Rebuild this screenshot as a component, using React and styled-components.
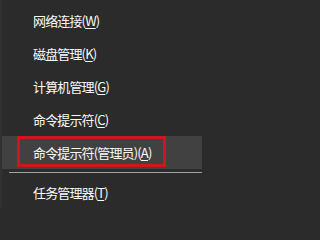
import React from 'react';
import styled, { createGlobalStyle } from 'styled-components';

const GlobalStyle = createGlobalStyle`
  html, body {
    margin: 0;
    padding: 0;
    background: #2b2b2b;
  }
`;

const items = [
  { label: '网络连接', key: 'W' },
  { label: '磁盘管理', key: 'K' },
  { label: '计算机管理', key: 'G' },
  { label: '命令提示符', key: 'C' },
  { label: '命令提示符(管理员)', key: 'A', active: true },
];

const App = () => {
  return (
    <>
      <GlobalStyle />
      <Menu>
        {items.map((it) => (
          <Item key={it.key} $active={it.active}>
            {it.label}(<u>{it.key}</u>)
            {it.active && <Mark />}
          </Item>
        ))}
        <Separator />
        <Item>
          任务管理器(<u>T</u>)
        </Item>
      </Menu>
    </>
  );
};

const Menu = styled.div`
  width: 208px;
  height: 209px;
  box-sizing: border-box;
  padding-top: 4px;
  background: #2b2b2b;
  border-left: 2px solid #313131;
  overflow: hidden;
  display: flex;
  flex-direction: column;
`;

const Item = styled.div`
  position: relative;
  height: 33px;
  flex-shrink: 0;
  display: flex;
  align-items: center;
  padding-left: 31px;
  margin-right: 6px;
  background: ${(p) => (p.$active ? '#414141' : 'transparent')};
  color: #fafafa;
  font-family: 'Microsoft YaHei', 'Noto Sans CJK SC', 'Noto Sans', sans-serif;
  font-size: 13px;
  letter-spacing: -0.85px;
  white-space: nowrap;

  u {
    text-decoration-thickness: 1px;
    text-underline-offset: 2px;
  }
`;

// red annotation frame drawn over the selected row
const Mark = styled.div`
  position: absolute;
  left: 15px;
  top: 0;
  width: 149px;
  height: 31px;
  box-sizing: border-box;
  border: 3px solid #d2141b;
`;

const Separator = styled.div`
  height: 1px;
  flex-shrink: 0;
  margin: 3px 6px 3px 7px;
  background: #a3a3a3;
`;

export default App;
